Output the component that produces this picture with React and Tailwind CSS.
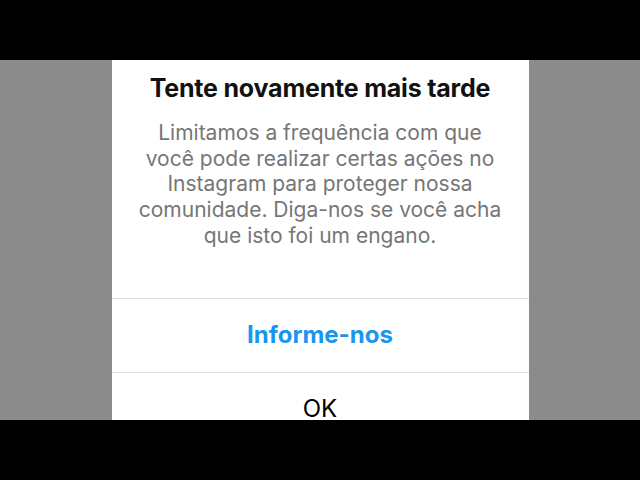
export default function App() {
  return (
    <div className="w-[640px] h-[480px] flex flex-col bg-black" style={{ fontFamily: 'Inter, "Liberation Sans", sans-serif' }}>
      <div className="h-[60px] shrink-0 bg-black" />
      <div className="h-[360px] shrink-0 bg-[#8b8b8b] flex justify-center overflow-hidden">
        <div className="w-[417px] bg-white flex flex-col">
          <h1 className="pt-[14px] text-center text-[25px] leading-[28px] font-bold text-[#111] tracking-[-0.2px]">
            Tente novamente mais tarde
          </h1>
          <p className="mt-[18px] px-2 text-center text-[21px] leading-[25.7px] text-[#767676]">
            Limitamos a frequência com que<br />
            você pode realizar certas ações no<br />
            Instagram para proteger nossa<br />
            comunidade. Diga-nos se você acha<br />
            que isto foi um engano.
          </p>
          <div className="mt-[49px] border-t border-[#dedede]">
            <button className="w-full h-[73px] flex items-center justify-center text-[24px] font-bold text-[#1896ee]">
              Informe-nos
            </button>
          </div>
          <div className="border-t border-[#dedede]">
            <button className="w-full h-[73px] flex items-center justify-center text-[24px] text-black">
              OK
            </button>
          </div>
        </div>
      </div>
      <div className="h-[60px] shrink-0 bg-black" />
    </div>
  );
}
